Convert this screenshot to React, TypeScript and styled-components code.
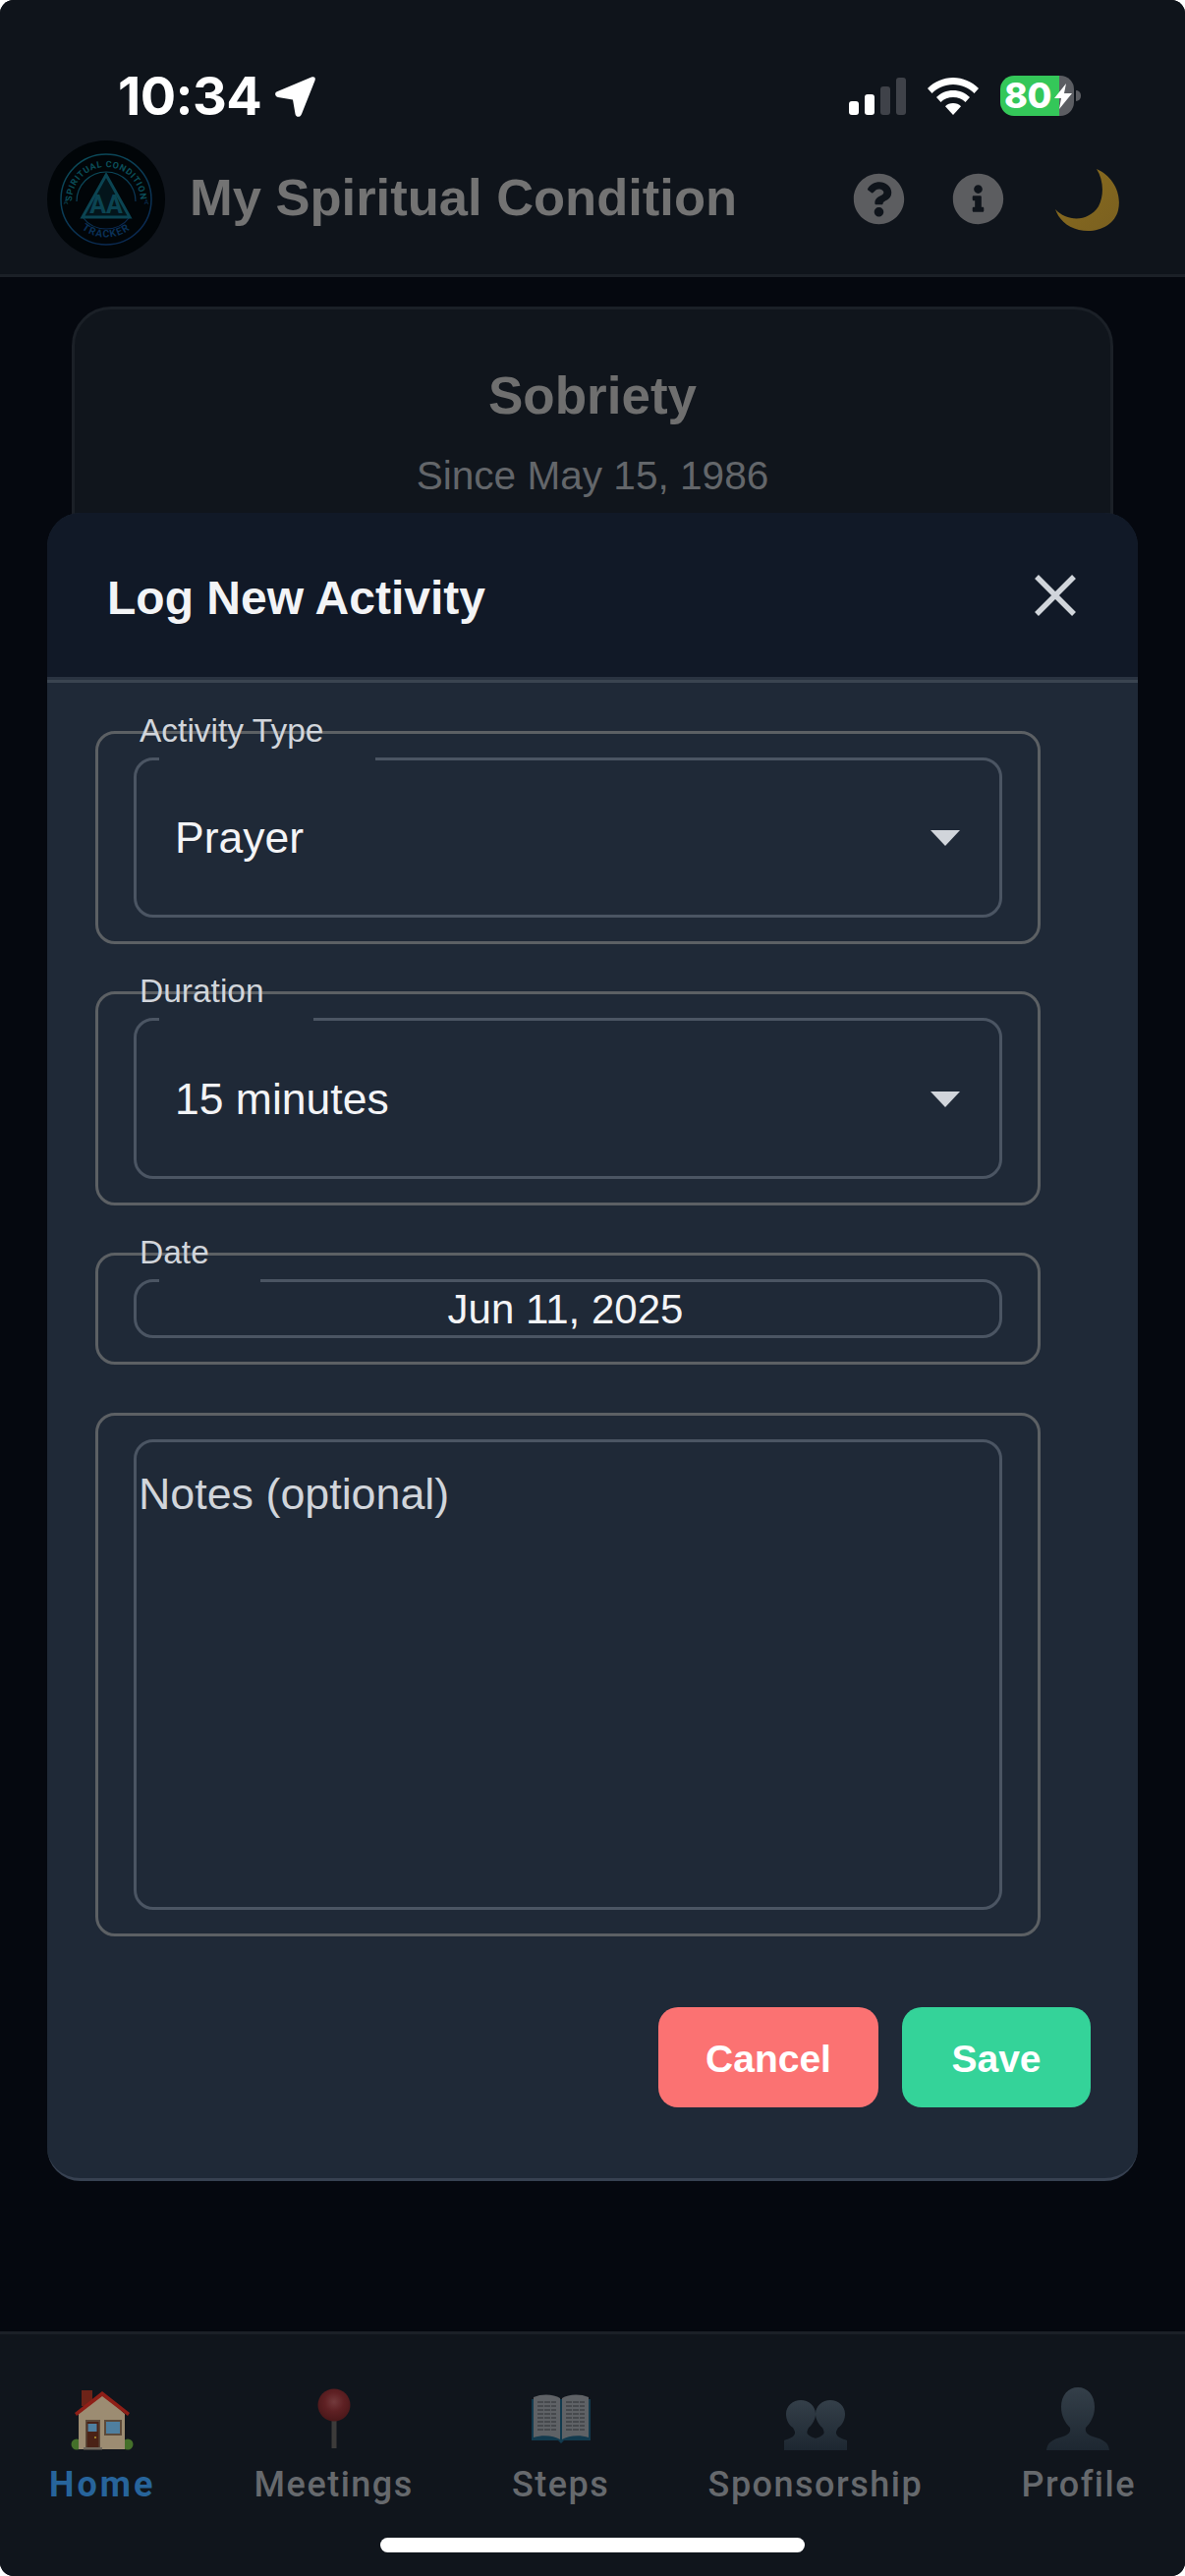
import React from "react";
import styled, { createGlobalStyle } from "styled-components";
import { FaQuestionCircle, FaInfoCircle } from "react-icons/fa";

const Global = createGlobalStyle`
  html, body { margin: 0; padding: 0; background: #fff; }
  * { box-sizing: border-box; }
`;

const Screen = styled.div`
  position: relative;
  width: 1206px;
  height: 2622px;
  overflow: hidden;
  display: flex;
  flex-direction: column;
  background: #05080f;
  border-radius: 14px;
  font-family: "Liberation Sans", Arial, sans-serif;
`;

const TopArea = styled.header`
  height: 282px;
  flex: none;
  display: flex;
  flex-direction: column;
  background: #0f141b;
  border-bottom: 3px solid #1b2027;
`;

const StatusBar = styled.div`
  height: 143px;
  flex: none;
  display: flex;
  justify-content: space-between;
  padding: 71px 113px 0 120px;
`;

const Clock = styled.div`
  display: flex;
  align-items: flex-start;
  gap: 14px;
  color: #fff;
  font-family: Inter, "Liberation Sans", sans-serif;
  font-weight: 700;
  font-size: 54px;
  line-height: 54px;
  letter-spacing: -0.6px;
`;

const ArrowIcon = styled.svg`
  width: 41px;
  height: 41px;
  margin-top: 7px;
`;

const StatusIcons = styled.div`
  display: flex;
  align-items: center;
  gap: 22px;
  height: 41px;
  margin-top: 6px;
`;

const StatusGlyph = styled.svg`
  display: block;
`;

const Battery = styled.div`
  position: relative;
  width: 75px;
  height: 41px;
  border-radius: 14px;
  background: linear-gradient(90deg, #34c759 0 60px, #5b5d62 60px);
  color: #fff;
  font-family: Inter, "Liberation Sans", sans-serif;
  font-weight: 800;
  font-size: 36px;
  line-height: 41px;
  padding-left: 4px;
  letter-spacing: -0.5px;
`;

const Bolt = styled.svg`
  position: absolute;
  left: 55px;
  top: 8px;
`;

const Nub = styled.div`
  position: absolute;
  left: 77px;
  top: 15px;
  width: 5px;
  height: 11px;
  border-radius: 0 6px 6px 0;
  background: #5b5d62;
`;

const AppBar = styled.div`
  flex: 1;
  display: flex;
  align-items: flex-start;
  padding-left: 48px;
`;

const Logo = styled.svg`
  width: 120px;
  height: 120px;
  flex: none;
`;

const AppTitle = styled.h1`
  margin: 29px 0 0 25px;
  font-size: 52.500px;
  line-height: 58px;
  font-weight: 700;
  color: #737373;
  flex: 1;
  white-space: nowrap;
`;

const RoundIcon = styled.div`
  width: 53px;
  height: 53px;
  margin-top: 33px;
  margin-right: 48px;
  color: #5c5d60;
  display: flex;
  flex: none;
`;

const Moon = styled.svg`
  width: 66px;
  height: 64px;
  margin-top: 29px;
  margin-right: 66px;
  margin-left: 4px;
  flex: none;
`;

const Backdrop = styled.main`
  flex: 1;
  padding: 30px 73px 0;
  overflow: hidden;
`;

const SobrietyCard = styled.section`
  height: 400px;
  padding-top: 58px;
  background: #10151c;
  border: 3px solid #1b2027;
  border-radius: 40px;
  text-align: center;
`;

const SobrietyTitle = styled.div`
  color: #6f6f6f;
  font-size: 53px;
  line-height: 60px;
  font-weight: 700;
`;

const SobrietySince = styled.div`
  color: #63666a;
  font-size: 40.600px;
  line-height: 46px;
  margin-top: 28px;
`;

const Modal = styled.div`
  position: absolute;
  left: 48px;
  top: 522px;
  width: 1110px;
  height: 1698px;
  background: #1f2937;
  border-radius: 34px;
  border-bottom: 3px solid #374151;
  overflow: hidden;
  display: flex;
  flex-direction: column;
`;

const ModalHeader = styled.div`
  height: 173px;
  flex: none;
  display: flex;
  align-items: center;
  justify-content: space-between;
  padding: 0 62px 0 61px;
  background: #111927;
  border-bottom: 3px solid #3a4450;
  box-shadow: inset 0 -3px 0 #2a3341;
`;

const ModalTitle = styled.h2`
  margin: 3px 0 0;
  font-size: 48px;
  line-height: 56px;
  font-weight: 700;
  color: #f3f4f6;
`;

const CloseButton = styled.div`
  display: flex;
  margin-bottom: 3px;
  color: #d1d5db;
`;

const Form = styled.div`
  flex: 1;
  display: flex;
  flex-direction: column;
  padding: 49px 0 0 49px;
`;

const Outer = styled.div<{ $h: number; $mb?: number }>`
  position: relative;
  width: 962px;
  height: ${(p) => p.$h}px;
  margin-bottom: ${(p) => p.$mb ?? 48}px;
  border: 3px solid #5c6064;
  border-radius: 20px;
  padding: 24px 36px 24px 36px;
  flex: none;
`;

const FloatLabel = styled.span`
  position: absolute;
  left: 42px;
  top: -22px;
  font-size: 33.500px;
  line-height: 38px;
  color: #d1d5db;
  white-space: nowrap;
`;

const InnerField = styled.fieldset`
  margin: 0;
  padding: 1px 40px 0 39px;
  min-width: 0;
  width: 100%;
  height: 100%;
  border: 3px solid #4b5563;
  border-radius: 20px;
  display: flex;
  align-items: center;
  justify-content: space-between;
  color: #f3f4f6;
  font-size: 44.500px;
`;

const Notch = styled.legend<{ $w: number }>`
  width: ${(p) => p.$w}px;
  height: 0;
  padding: 0;
  margin-left: -16px;
  line-height: 0;
`;

const Caret = styled.div`
  width: 0;
  height: 0;
  border-left: 15px solid transparent;
  border-right: 15px solid transparent;
  border-top: 16px solid #d1d5db;
`;

const DateValue = styled.div`
  width: 100%;
  text-align: center;
  font-size: 42px;
  line-height: 44px;
  margin-left: -2px;
`;

const NotesBox = styled.div`
  width: 100%;
  height: 100%;
  border: 3px solid #4b5563;
  border-radius: 20px;
  padding: 27px 2px;
  color: #d1d5db;
  font-size: 44.800px;
  line-height: 50px;
`;

const Actions = styled.div`
  display: flex;
  justify-content: flex-end;
  gap: 24px;
  padding-right: 48px;
  margin-top: 72px;
`;

const ActionButton = styled.div<{ $bg: string; $w: number }>`
  width: ${(p) => p.$w}px;
  height: 102px;
  padding-top: 3px;
  border-radius: 20px;
  background: ${(p) => p.$bg};
  color: #fff;
  font-size: 39px;
  font-weight: 700;
  display: flex;
  align-items: center;
  justify-content: center;
`;

const TabBar = styled.nav`
  position: absolute;
  left: 0;
  right: 0;
  top: 2373px;
  bottom: 0;
  background: #10151c;
  border-top: 3px solid #1b2027;
  padding-top: 50px;
`;

const TabRow = styled.div`
  display: flex;
  justify-content: space-between;
  padding: 0 50px;
`;

const Tab = styled.div`
  display: flex;
  flex-direction: column;
  align-items: center;
  gap: 11px;
`;

const TabIcon = styled.svg`
  width: 72px;
  height: 72px;
  display: block;
`;

const TabLabel = styled.span<{ $active?: boolean }>`
  font-family: Roboto, "Liberation Sans", sans-serif;
  font-size: 36px;
  line-height: 41px;
  letter-spacing: ${(p) => (p.$active ? "3px" : "1.500px")};
  font-weight: ${(p) => (p.$active ? 700 : 500)};
  color: ${(p) => (p.$active ? "#27649b" : "#66696d")};
`;

const HomeIndicator = styled.div`
  position: absolute;
  left: 387px;
  top: 2583px;
  width: 432px;
  height: 15px;
  border-radius: 8px;
  background: #fff;
`;

function Signal() {
  return (
    <StatusGlyph width="58" height="38" viewBox="0 0 58 38">
      <rect x="0" y="24" width="10" height="14" rx="3" fill="#fff" />
      <rect x="16" y="17" width="10" height="21" rx="3" fill="#fff" />
      <rect x="32" y="9" width="10" height="29" rx="3" fill="#3f4249" />
      <rect x="48" y="0" width="10" height="38" rx="3" fill="#3f4249" />
    </StatusGlyph>
  );
}

function Wifi() {
  return (
    <StatusGlyph width="52" height="38" viewBox="0 0 52 38">
      <path d="M26 0C16 0 7 4 0 11l4.500 5C10 10.500 17.500 7 26 7s16 3.500 21.500 9l4.500-5C45 4 36 0 26 0Z" fill="#fff" />
      <path d="M26 13c-6.500 0-12.500 2.500-17 7l4.500 5c3.200-3.200 7.600-5 12.500-5s9.300 1.800 12.500 5l4.500-5c-4.500-4.500-10.500-7-17-7Z" fill="#fff" />
      <path d="M26 26c-3.200 0-6 1.200-8 3.200L26 38l8-8.800c-2-2-4.800-3.200-8-3.200Z" fill="#fff" />
    </StatusGlyph>
  );
}

function LogoMark() {
  return (
    <Logo viewBox="0 0 120 120">
      <defs>
        <linearGradient id="lg" x1="0" y1="0" x2="0.500" y2="1">
          <stop offset="0" stopColor="#0b4f5a" />
          <stop offset="1" stopColor="#0a2a52" />
        </linearGradient>
        <path id="arcTop" d="M25 62a35 35 0 0 1 70 0" fill="none" />
        <path id="arcBottom" d="M24 76a40 40 0 0 0 72 0" fill="none" />
      </defs>
      <circle cx="60" cy="60" r="60" fill="#010508" />
      <circle cx="60" cy="60" r="46" fill="none" stroke="url(#lg)" strokeWidth="1.500" />
      <path d="M30 62A30 30 0 0 1 90 62M84 78A30 30 0 0 1 36 78" fill="none" stroke="url(#lg)" strokeWidth="1.200" />
      <path d="M60 35 84 78H36Z" fill="#03151b" stroke="#0b4452" strokeWidth="3" />
      <text x="60" y="74" textAnchor="middle" fontFamily="Roboto, sans-serif" fontSize="25" fontWeight="700" fill="#0b4452">AA</text>
      <text fontFamily="Roboto, sans-serif" fontSize="9" fontWeight="700" fill="#0b4f5a" textLength="108">
        <textPath href="#arcTop" startOffset="0">SPIRITUAL CONDITION</textPath>
      </text>
      <text textAnchor="middle" fontFamily="Roboto, sans-serif" fontSize="10.500" fontWeight="700" fill="#0a3056" letterSpacing="1">
        <textPath href="#arcBottom" startOffset="50%">TRACKER</textPath>
      </text>
      <text x="19" y="65" textAnchor="middle" fontFamily="Roboto, sans-serif" fontSize="7" fill="#0b4452">A</text>
      <text x="101" y="65" textAnchor="middle" fontFamily="Roboto, sans-serif" fontSize="7" fill="#0a3056">A</text>
    </Logo>
  );
}

function HouseIcon() {
  return (
    <TabIcon viewBox="0 0 72 72">
      <rect x="15" y="7" width="11" height="16" fill="#6d2318" />
      <circle cx="10" cy="62" r="5.500" fill="#44702a" />
      <circle cx="62" cy="62" r="5.500" fill="#44702a" />
      <path d="M12 31 36 10 59 31V67H12Z" fill="#9c8c72" />
      <path d="M8 30 36 8 64 30 62 33 36 13 10 33Z" fill="#8f1f17" />
      <rect x="19" y="37" width="15" height="28" fill="#5c4a3a" />
      <rect x="20.500" y="39" width="12" height="26" fill="#4a2216" />
      <rect x="21.500" y="41" width="9" height="8" fill="#4f7f9f" />
      <rect x="38" y="37" width="18" height="16" fill="#5c4a3a" />
      <rect x="40" y="39" width="14" height="12" fill="#4f7f9f" />
      <circle cx="29" cy="55" r="1" fill="#b89a30" />
      <rect x="17" y="65" width="19" height="2.500" fill="#6f675c" />
    </TabIcon>
  );
}

function PinIcon() {
  return (
    <TabIcon viewBox="0 0 72 72">
      <defs>
        <radialGradient id="pinHead" cx="0.500" cy="0.400" r="0.600">
          <stop offset="0" stopColor="#733a3c" />
          <stop offset="0.500" stopColor="#5e2023" />
          <stop offset="1" stopColor="#4a1719" />
        </radialGradient>
      </defs>
      <rect x="33.500" y="36" width="5" height="30" fill="#3c3b3a" />
      <circle cx="36" cy="22" r="16.500" fill="url(#pinHead)" />
    </TabIcon>
  );
}

function BookIcon() {
  return (
    <TabIcon viewBox="0 0 72 72">
      <path d="M6 16V58H33L36 61 39 58H66V16Z" fill="#123a4e" />
      <path d="M8 14C17 10 29 11 35 15V57C29 53 17 52 8 55Z" fill="#5f6266" />
      <path d="M64 14C55 10 43 11 37 15V57C43 53 55 52 64 55Z" fill="#5f6266" />
      <path d="M12 19H31M12 23H31M12 27H31M12 31H31M12 35H31M12 39H31M12 43H31M12 47H31M41 19H60M41 23H60M41 27H60M41 31H60M41 35H60M41 39H60M41 43H60M41 47H60" stroke="#3f4246" strokeWidth="1.500" strokeDasharray="6 1" />
    </TabIcon>
  );
}

function BustIcon() {
  return (
    <TabIcon viewBox="0 0 72 72">
      <defs>
        <linearGradient id="bust" x1="0" y1="0" x2="0" y2="1">
          <stop offset="0" stopColor="#343f49" />
          <stop offset="1" stopColor="#1d2731" />
        </linearGradient>
      </defs>
      <path d="M3 68C4 60 9 57 20 54C26 52 28 49 27 45C22 40 18 33 18 24C18 12 25 4 35 4S52 12 52 24C52 33 48 40 43 45C42 49 44 52 50 54C61 57 66 60 67 68Z" fill="url(#bust)" />
    </TabIcon>
  );
}

function BustsIcon() {
  return (
    <TabIcon viewBox="0 0 72 72">
      <defs>
        <linearGradient id="busts" x1="0" y1="0" x2="0" y2="1">
          <stop offset="0" stopColor="#343f49" />
          <stop offset="1" stopColor="#1d2731" />
        </linearGradient>
      </defs>
      <path d="M68 68V58C63 56 58 55 57 51C56.500 49 58 47 59 45C64 42 66 36 66 31C66 23 59 17 51 17C43 17 36 23 36 31C36 36 39 42 43 45C44 47 45 49 44.500 51C42 55 36 55 32 58V68Z" fill="url(#busts)" />
      <path d="M4 68V58C9 56 14 55 15 51C15.500 49 14 47 13 45C8 42 6 36 6 31C6 23 13 17 21 17C29 17 36 23 36 31C36 36 33 42 29 45C28 47 27 49 27.500 51C30 55 36 55 40 58C43 60 45 64 46 68Z" fill="url(#busts)" />
    </TabIcon>
  );
}

export default function App() {
  return (
    <>
      <Global />
      <Screen>
        <TopArea>
          <StatusBar>
            <Clock>
              10:34
              <ArrowIcon viewBox="0 0 41 41">
                <path d="M37 0.500C40 -0.500 41.500 1 40.500 4L27 38C25.500 42 21 41.500 20.500 38L18 23.500 3 21C-0.500 20 -1 16 2.500 15Z" fill="#fff" />
              </ArrowIcon>
            </Clock>
            <StatusIcons>
              <Signal />
              <Wifi />
              <Battery>
                80
                <Bolt width="18" height="26" viewBox="0 0 18 26">
                  <path d="M12 0 0 15H7L5 26 18 10H10Z" fill="#fff" />
                </Bolt>
                <Nub />
              </Battery>
            </StatusIcons>
          </StatusBar>
          <AppBar>
            <LogoMark />
            <AppTitle>My Spiritual Condition</AppTitle>
            <RoundIcon><FaQuestionCircle size={53} /></RoundIcon>
            <RoundIcon><FaInfoCircle size={53} /></RoundIcon>
            <Moon viewBox="0 0 66 64">
              <defs>
                <linearGradient id="moon" x1="0" y1="0" x2="1" y2="1">
                  <stop offset="0" stopColor="#8a6c1e" />
                  <stop offset="1" stopColor="#7a6020" />
                </linearGradient>
              </defs>
              <path d="M42 0C58 7 68 24 64 42 60 58 42 66 24 62 11 59 3 50 0 41 12 54 34 54 44 38 50 26 49 11 42 0Z" fill="url(#moon)" />
            </Moon>
          </AppBar>
        </TopArea>
        <Backdrop>
          <SobrietyCard>
            <SobrietyTitle>Sobriety</SobrietyTitle>
            <SobrietySince>Since May 15, 1986</SobrietySince>
          </SobrietyCard>
        </Backdrop>
        <Modal>
          <ModalHeader>
            <ModalTitle>Log New Activity</ModalTitle>
            <CloseButton>
              <svg width="44" height="44" viewBox="0 0 44 44">
                <path d="M3 3 41 41M41 3 3 41" stroke="currentColor" strokeWidth="5.500" />
              </svg>
            </CloseButton>
          </ModalHeader>
          <Form>
            <Outer $h={217}>
              <FloatLabel>Activity Type</FloatLabel>
              <InnerField>
                <Notch $w={220} />
                Prayer
                <Caret />
              </InnerField>
            </Outer>
            <Outer $h={218}>
              <FloatLabel>Duration</FloatLabel>
              <InnerField>
                <Notch $w={157} />
                15 minutes
                <Caret />
              </InnerField>
            </Outer>
            <Outer $h={114} $mb={49}>
              <FloatLabel>Date</FloatLabel>
              <InnerField>
                <Notch $w={103} />
                <DateValue>Jun 11, 2025</DateValue>
              </InnerField>
            </Outer>
            <Outer $h={533} $mb={0}>
              <NotesBox>Notes (optional)</NotesBox>
            </Outer>
            <Actions>
              <ActionButton $bg="#fb7272" $w={224}>Cancel</ActionButton>
              <ActionButton $bg="#34d399" $w={192}>Save</ActionButton>
            </Actions>
          </Form>
        </Modal>
        <TabBar>
          <TabRow>
            <Tab><HouseIcon /><TabLabel $active>Home</TabLabel></Tab>
            <Tab><PinIcon /><TabLabel>Meetings</TabLabel></Tab>
            <Tab><BookIcon /><TabLabel>Steps</TabLabel></Tab>
            <Tab><BustsIcon /><TabLabel>Sponsorship</TabLabel></Tab>
            <Tab><BustIcon /><TabLabel>Profile</TabLabel></Tab>
          </TabRow>
        </TabBar>
        <HomeIndicator />
      </Screen>
    </>
  );
}
